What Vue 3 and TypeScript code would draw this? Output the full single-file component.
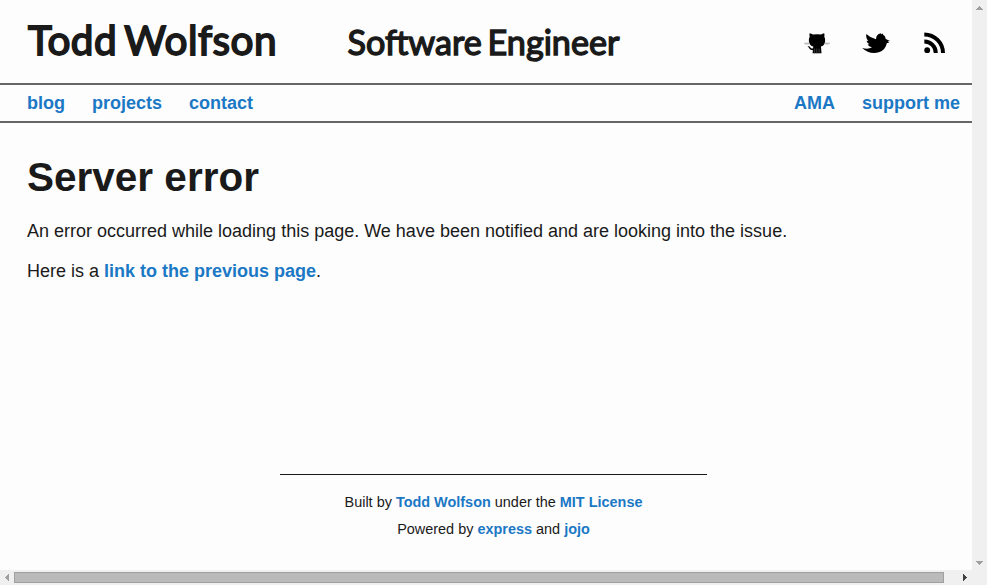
<script setup lang="ts">
interface NavLink {
  label: string
  href: string
}

const mainLinks: NavLink[] = [
  { label: 'blog', href: '#blog' },
  { label: 'projects', href: '#projects' },
  { label: 'contact', href: '#contact' },
]

const sideLinks: NavLink[] = [
  { label: 'AMA', href: '#ama' },
  { label: 'support me', href: '#support-me' },
]
</script>

<template>
  <div class="window">
    <div class="viewport">
      <div class="page">
        <header class="header">
          <h1 class="title">Todd Wolfson</h1>
          <h2 class="subtitle">Software Engineer</h2>
          <div class="social">
            <a href="#github" aria-label="GitHub">
              <svg width="28" height="28" viewBox="0 0 28 28">
                <path d="M6.6 4.2 Q8.6 4.4 9.8 5.6 Q14 5 18.2 5.6 Q19.2 4.4 21.2 4.2 Q21.8 6.1 21.3 7.8 Q22.4 9.5 22.1 12.2 Q21.8 16.6 17.8 17.6 Q18.2 18.4 18.2 20.2 L18.5 24.3 H9.5 L10 21.1 Q6.8 21.4 5.7 18.6 L4.5 17.3 Q6.7 17 7.4 18.6 Q8.3 19.9 10.1 19.3 Q10 18.2 10.4 17.6 Q6.4 16.6 5.9 12.2 Q5.6 9.5 6.7 7.8 Q6.2 6 6.6 4.2Z" />
                <path class="gaps" d="M11.6 19.5 V25 M13.8 19.5 V25 M16.1 19.5 V25" />
                <path class="whiskers" d="M1 14.2 H6.5 M2.4 15.2 L6.8 14.6 M21.6 14.2 H27 M21.3 14.6 L25.6 15.2" />
              </svg>
            </a>
            <a href="#twitter" aria-label="Twitter">
              <svg width="28" height="28" viewBox="0 0 28 28">
                <path d="M.2 18.9 Q6 20.8 10 18.3 Q6.6 17.8 5.6 15.6 L7.4 15.3 Q4.9 14 4.6 11.8 L6.4 11.9 Q3.6 9.2 4.3 4.9 Q8.6 9 14 10.2 Q14.1 5.4 18.8 4.2 L19.5 5.2 L21.1 4.5 L21.1 5.8 Q23.4 6.9 23.8 9.9 L28 12 L25.6 12.6 L27.2 14 L24.9 14 Q23.6 20.6 17.5 23.1 Q7.6 26 .2 18.9Z" />
              </svg>
            </a>
            <a href="#feed" aria-label="RSS feed">
              <svg width="28" height="28" viewBox="0 0 28 28">
                <circle cx="6.2" cy="21.2" r="2.9" />
                <path class="wave" d="M3.3 12.6 A11.4 11.4 0 0 1 14.8 24.1 M3.3 5.4 A18.7 18.7 0 0 1 22 24.1" />
              </svg>
            </a>
          </div>
        </header>

        <nav class="nav">
          <div class="nav-group">
            <a v-for="link in mainLinks" :key="link.label" :href="link.href">{{ link.label }}</a>
          </div>
          <div class="nav-group">
            <a v-for="link in sideLinks" :key="link.label" :href="link.href">{{ link.label }}</a>
          </div>
        </nav>

        <main class="content">
          <h1>Server error</h1>
          <p>An error occurred while loading this page. We have been notified and are looking into the issue.</p>
          <p>Here is a <a href="#previous">link to the previous page</a>.</p>
        </main>

        <footer class="footer">
          <p>Built by <a href="#author">Todd Wolfson</a> under the <a href="#license">MIT License</a></p>
          <p>Powered by <a href="#express">express</a> and <a href="#jojo">jojo</a></p>
        </footer>
      </div>
    </div>

    <div class="bar vertical">
      <svg width="15" height="15" shape-rendering="crispEdges"><path d="M7 6h1v1h1v1h1v1h1v1H4V9h1V8h1V7h1z" /></svg>
      <svg width="15" height="15" shape-rendering="crispEdges"><path d="M4 6h7v1h-1v1H9v1H8v1H7V9H6V8H5V7H4z" /></svg>
    </div>
    <div class="bar horizontal">
      <svg width="14" height="15" shape-rendering="crispEdges"><path d="M9 4v7H8v-1H7V9H6V8H5V7h1V6h1V5h1V4z" /></svg>
      <div class="thumb"></div>
      <svg class="active" width="14" height="15" shape-rendering="crispEdges"><path d="M5 4h1v1h1v1h1v1h1v1H8v1H7v1H6v1H5z" /></svg>
    </div>
    <div class="corner"></div>
  </div>
</template>

<style>
body {
  margin: 0;
  overflow: hidden;
  background: #fdfdfd;
}
</style>

<style scoped>
.window {
  display: grid;
  grid-template-columns: 972px 15px;
  grid-template-rows: 570px 15px;
  width: 987px;
  height: 585px;
  overflow: hidden;
  color: #1a1a1a;
  font-family: "Liberation Sans", Arial, sans-serif;
  font-size: 18px;
}

.viewport {
  overflow: hidden;
  background: #fdfdfd;
}

.page {
  display: flex;
  flex-direction: column;
  width: 987px;
  height: 570px;
}

a {
  color: #1b78c5;
  font-weight: bold;
  text-decoration: none;
}

.header {
  display: flex;
  box-sizing: border-box;
  height: 83px;
  padding: 0 38px 0 28px;
}

.title,
.subtitle {
  margin: 0;
  font-family: Lato, sans-serif;
  font-weight: 400;
  white-space: nowrap;
}

.title {
  width: 319.5px;
  padding-top: 14px;
  font-size: 40.5px;
  line-height: 52px;
  letter-spacing: 0.45px;
  word-spacing: -3px;
  -webkit-text-stroke: 1.8px #1a1a1a;
}

.subtitle {
  padding-top: 20px;
  font-size: 34.2px;
  line-height: 44px;
  word-spacing: -3px;
  -webkit-text-stroke: 1.4px #1a1a1a;
}

.social {
  display: flex;
  gap: 31px;
  margin-left: auto;
  padding-top: 29px;
}

.social a,
.social svg {
  display: block;
  width: 28px;
  height: 28px;
}

.social svg {
  fill: #000;
}

.gaps {
  fill: none;
  stroke: #777;
  stroke-width: 0.5;
}

.whiskers {
  fill: none;
  stroke: #999;
  stroke-width: 0.7;
}

.wave {
  fill: none;
  stroke: #000;
  stroke-width: 4;
}

.nav {
  display: flex;
  justify-content: space-between;
  box-sizing: border-box;
  height: 40px;
  padding: 0 27px;
  border-top: 2px solid #666;
  border-bottom: 2px solid #666;
  line-height: 36px;
}

.nav-group {
  display: flex;
  gap: 27px;
}

.content {
  padding: 30px 27px 0;
}

.content h1 {
  margin: 0 0 17px;
  font-size: 40.5px;
  line-height: 48px;
}

.content p {
  margin: 0 0 14px;
  line-height: 26px;
}

.footer {
  width: 427px;
  margin: auto auto 27px;
  padding-top: 14px;
  border-top: 1px solid #1a1a1a;
  font-size: 14.45px;
  line-height: 27px;
  text-align: center;
}

.footer p {
  margin: 0;
}

.bar,
.corner {
  display: flex;
  background: #f0f0f0;
}

.bar svg {
  display: block;
  flex: none;
  fill: #a0a0a0;
}

.bar .active {
  fill: #404040;
}

.vertical {
  flex-direction: column;
  justify-content: space-between;
}

.horizontal {
  align-items: center;
}

.thumb {
  box-sizing: border-box;
  width: 930px;
  height: 11px;
  margin-right: 14px;
  border: 1px solid #a0a0a0;
  background: #bababa;
}
</style>
